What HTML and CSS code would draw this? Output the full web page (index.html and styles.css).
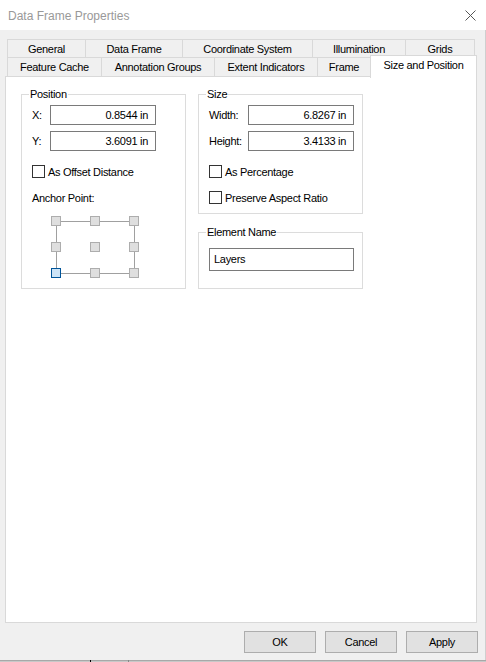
FILE: index.html
```html
<!DOCTYPE html>
<html>
<head>
<meta charset="utf-8">
<link rel="stylesheet" href="styles.css">
</head>
<body>
<div class="window">
  <div class="titlebar">
    <span class="title">Data Frame Properties</span>
    <svg class="close" width="11" height="11" viewBox="0 0 11 11"><path d="M0.5 0.5 L10.5 10.5 M10.5 0.5 L0.5 10.5" stroke="#555" stroke-width="1" fill="none"/></svg>
  </div>
  <div class="content">
    <div class="tabs">
      <div class="tabrow row1">
        <div class="tab t-general">General</div>
        <div class="tab t-dataframe">Data Frame</div>
        <div class="tab t-coord">Coordinate System</div>
        <div class="tab t-illum">Illumination</div>
        <div class="tab t-grids last">Grids</div>
      </div>
      <div class="tabrow row2">
        <div class="tab t-cache">Feature Cache</div>
        <div class="tab t-annot">Annotation Groups</div>
        <div class="tab t-extent">Extent Indicators</div>
        <div class="tab t-frame">Frame</div>
        <div class="tab t-size selected">Size and Position</div>
      </div>
    </div>
    <div class="panel">
      <div class="col">
        <fieldset class="group g-position">
          <legend>Position</legend>
          <div class="field"><span class="lbl lbl-short">X:</span><div class="input num">0.8544 in</div></div>
          <div class="field"><span class="lbl lbl-short">Y:</span><div class="input num">3.6091 in</div></div>
          <div class="check first"><span class="box"></span><span>As Offset Distance</span></div>
          <div class="anchor-label">Anchor Point:</div>
          <svg class="anchor" width="89" height="63" viewBox="0 0 89 63">
            <g stroke="#a0a0a0" stroke-width="1">
              <path d="M10 5.5 H39 M49 5.5 H78 M10 57.5 H39 M49 57.5 H78 M5.5 10 V26 M5.5 36 V52 M83.5 10 V26 M83.5 36 V52"/>
            </g>
            <g fill="#dfdfdf" stroke="#adadad" stroke-width="1">
              <rect x="0.5" y="0.5" width="9" height="9"/>
              <rect x="39.5" y="0.5" width="9" height="9"/>
              <rect x="78.5" y="0.5" width="9" height="9"/>
              <rect x="0.5" y="26.5" width="9" height="9"/>
              <rect x="39.5" y="26.5" width="9" height="9"/>
              <rect x="78.5" y="26.5" width="9" height="9"/>
              <rect x="39.5" y="52.5" width="9" height="9"/>
              <rect x="78.5" y="52.5" width="9" height="9"/>
            </g>
            <rect x="0.5" y="52.5" width="9" height="9" fill="#cce4f7" stroke="#005499" stroke-width="1"/>
          </svg>
        </fieldset>
      </div>
      <div class="col">
        <fieldset class="group g-size">
          <legend>Size</legend>
          <div class="field"><span class="lbl lbl-long">Width:</span><div class="input num">6.8267 in</div></div>
          <div class="field"><span class="lbl lbl-long">Height:</span><div class="input num">3.4133 in</div></div>
          <div class="check first"><span class="box"></span><span>As Percentage</span></div>
          <div class="check"><span class="box"></span><span>Preserve Aspect Ratio</span></div>
        </fieldset>
        <fieldset class="group g-name">
          <legend>Element Name</legend>
          <div class="input text">Layers</div>
        </fieldset>
      </div>
    </div>
    <div class="buttons">
      <div class="btn">OK</div>
      <div class="btn">Cancel</div>
      <div class="btn">Apply</div>
    </div>
  </div>
  <div class="taskbar"><span class="tick tick-dark"></span><span class="tick tick-light"></span></div>
</div>
</body>
</html>
```
FILE: styles.css
```css
* { box-sizing: border-box; }
html, body { margin: 0; padding: 0; background: #f0f0f0; }
body {
  width: 486px;
  height: 662px;
  overflow: hidden;
  font-family: "Liberation Sans", Arial, sans-serif;
  font-size: 11px;
  letter-spacing: -0.3px;
  color: #000;
}
.window {
  width: 486px;
  height: 662px;
  display: flex;
  flex-direction: column;
}
.titlebar {
  height: 30px;
  background: #fff;
  display: flex;
  align-items: center;
  justify-content: space-between;
  padding: 0 10px 0 8px;
  flex: none;
}
.title {
  font-size: 12px;
  letter-spacing: 0;
  color: #999;
  padding-top: 1px;
}
.close { display: block; }
.content {
  flex: none;
  height: 630px;
  border-right: 1px solid #cfcfcf;
  padding: 9px 0 0 5px;
  display: flex;
  flex-direction: column;
}
.tabs { padding-left: 2px; }
.tabrow { display: flex; align-items: flex-start; }
.row1 { height: 18px; }
.row2 { height: 19px; }
.tab {
  border-top: 1px solid #d9d9d9;
  border-left: 1px solid #d9d9d9;
  background: #f0f0f0;
  text-align: center;
  white-space: nowrap;
}
.row1 .tab { height: 18px; line-height: 18px; }
.row2 .tab { height: 19px; line-height: 19px; }
.tab.last { border-right: 1px solid #d9d9d9; }
.t-general { width: 78px; }
.t-dataframe { width: 97px; }
.t-coord { width: 130px; }
.t-illum { width: 93px; }
.t-grids { width: 70px; }
.t-cache { width: 94px; }
.t-annot { width: 113px; }
.t-extent { width: 103px; }
.t-frame { width: 53px; }
.row2 .tab.selected {
  width: 107px;
  height: 23px;
  margin-top: -2px;
  line-height: 19px;
  background: #fff;
  border-right: 1px solid #d9d9d9;
  position: relative;
  z-index: 1;
}
.panel {
  width: 472px;
  height: 547px;
  background: #fff;
  border: 1px solid #d9d9d9;
  padding: 10px 0 0 15px;
  display: flex;
  gap: 12px;
  align-items: flex-start;
}
.col { display: flex; flex-direction: column; gap: 11px; width: 165px; }
.group {
  margin: 0;
  border: 1px solid #dcdcdc;
  padding: 4px 0 0 10px;
  min-width: 0;
  width: 165px;
}
.group legend {
  padding: 0 1px;
  margin-left: -3px;
  line-height: 14px;
  height: 14px;
}
.g-position { height: 202px; }
.g-size { height: 127px; }
.g-name { height: 64px; padding-top: 9px; }
.field { display: flex; align-items: center; height: 20px; margin-bottom: 6px; }
.lbl-short { width: 18px; }
.lbl-long { width: 39px; }
.input {
  border: 1px solid #7a7a7a;
  background: #fff;
  height: 20px;
  line-height: 18px;
}
.input.num { width: 106px; text-align: right; padding-right: 7px; }
.input.text { width: 145px; height: 23px; line-height: 21px; padding-left: 4px; }
.check { display: flex; align-items: center; height: 13px; margin-top: 13px; }
.check.first { margin-top: 14px; }
.box {
  width: 13px;
  height: 13px;
  border: 1px solid #333;
  background: #fff;
  margin-right: 3px;
  flex: none;
}
.anchor-label { margin-top: 13px; line-height: 14px; }
.anchor { display: block; margin: 11px 0 0 19px; }
.buttons {
  display: flex;
  justify-content: flex-end;
  gap: 9px;
  margin-top: 8px;
  padding-right: 7px;
}
.btn {
  width: 72px;
  height: 22px;
  line-height: 20px;
  text-align: center;
  background: #e1e1e1;
  border: 1px solid #adadad;
}
.taskbar {
  height: 2px;
  background: #c8c8c8;
  border-top: 1px solid #a8a8a8;
  display: flex;
  flex: none;
}
.tick { width: 1px; height: 2px; margin-top: -1px; }
.tick-dark { background: #000; margin-left: 90px; }
.tick-light { background: #888; margin-left: 37px; }
```
